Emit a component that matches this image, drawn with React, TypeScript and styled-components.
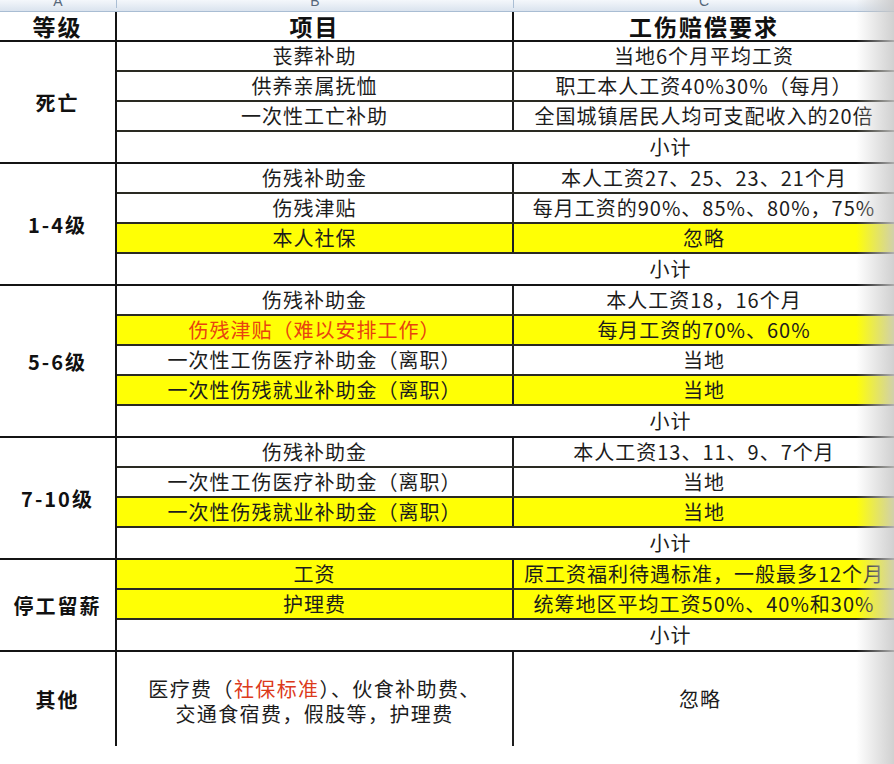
import styled, { createGlobalStyle } from "styled-components";

interface Row {
  item?: string;
  demand?: string;
  highlight?: boolean;
  red?: boolean;
  subtotal?: boolean;
}

interface Group {
  level: string;
  rows: Row[];
}

const GlobalStyle = createGlobalStyle`
  html, body {
    margin: 0;
    padding: 0;
    background: #ffffff;
  }
  body {
    font-family: "Noto Sans CJK SC", "Noto Sans", sans-serif;
    color: #1c1c1c;
  }
`;

const Sheet = styled.div`
  position: relative;
  width: 894px;
  height: 764px;
  overflow: hidden;
  background: #ffffff;

  /* grey fade along the right edge of the photo */
  &::after {
    content: "";
    position: absolute;
    top: 0;
    right: 0;
    bottom: 0;
    width: 38px;
    background: linear-gradient(
      to right,
      rgba(255, 255, 255, 0),
      rgba(200, 200, 200, 0.85)
    );
    pointer-events: none;
  }
`;

const ColumnBar = styled.div`
  display: grid;
  grid-template-columns: 117px 397px 1fr;
  height: 12px;
  overflow: hidden;
  background: linear-gradient(#f4f7fb, #dae3ee);
  border-bottom: 1px solid #a9bdd3;
  box-sizing: border-box;
`;

const ColumnLetter = styled.div`
  display: flex;
  justify-content: center;
  font-family: "Liberation Sans", Arial, sans-serif;
  font-size: 14px;
  line-height: 1;
  color: #56677a;
  border-right: 1px solid #aabed4;
  transform: translateY(-6px);

  &:last-child {
    border-right: none;
  }
`;

const Columns = styled.div`
  display: grid;
  grid-template-columns: 117px 397px 1fr;
  box-sizing: border-box;
`;

const TitleRow = styled(Columns)`
  height: 30px;
  border-bottom: 2px solid #141414;
`;

const TitleCell = styled.div<{ $split?: boolean }>`
  display: flex;
  align-items: center;
  justify-content: center;
  padding-top: 1px;
  font-size: 23px;
  line-height: 1;
  font-weight: 700;
  letter-spacing: 2px;
  color: #111;
  border-right: ${({ $split }) => ($split ? "2px solid #141414" : "none")};
`;

const GroupBlock = styled.div`
  display: flex;
  border-bottom: 2px solid #141414;
`;

const LevelCell = styled.div`
  width: 117px;
  flex-shrink: 0;
  display: flex;
  align-items: center;
  justify-content: center;
  box-sizing: border-box;
  border-right: 2px solid #141414;
  font-size: 20px;
  font-weight: 700;
  letter-spacing: 2px;
  color: #111;
`;

const RowStack = styled.div`
  flex: 1;
  display: flex;
  flex-direction: column;
`;

const ItemRow = styled.div<{ $highlight?: boolean }>`
  display: grid;
  grid-template-columns: 397px 1fr;
  height: 30px;
  box-sizing: border-box;
  background: ${({ $highlight }) => ($highlight ? "#ffff05" : "transparent")};
  border-bottom: 2px solid #2a2a22;

  &:last-child {
    border-bottom: none;
  }
`;

const Cell = styled.div<{ $red?: boolean; $split?: boolean }>`
  display: flex;
  align-items: center;
  justify-content: center;
  white-space: nowrap;
  font-size: 20px;
  line-height: 1;
  letter-spacing: 1px;
  color: ${({ $red }) => ($red ? "#e8430f" : "#1c1c1c")};
  border-right: ${({ $split }) => ($split ? "2px solid #1e1e1e" : "none")};
`;

const SubtotalRow = styled.div`
  display: flex;
  align-items: center;
  justify-content: center;
  height: 30px;
  padding-left: 330px;
  font-size: 20px;
  line-height: 1;
  letter-spacing: 1px;
  color: #1c1c1c;
`;

const OtherRow = styled(Columns)`
  height: 94px;
`;

const OtherLevel = styled(LevelCell)`
  width: auto;
`;

const OtherItem = styled.div`
  display: flex;
  flex-direction: column;
  align-items: center;
  justify-content: center;
  gap: 5px;
  border-right: 2px solid #1e1e1e;
  font-size: 20px;
  letter-spacing: 1.4px;
  line-height: 1;
  color: #1c1c1c;
  padding-top: 4px;
`;

const RedText = styled.span`
  color: #dc3a1c;
`;

const OtherDemand = styled(Cell)`
  padding-right: 8px;
`;

const subtotal: Row = { subtotal: true };

const groups: Group[] = [
  {
    level: "死亡",
    rows: [
      { item: "丧葬补助", demand: "当地6个月平均工资" },
      { item: "供养亲属抚恤", demand: "职工本人工资40%30%（每月）" },
      { item: "一次性工亡补助", demand: "全国城镇居民人均可支配收入的20倍" },
      subtotal,
    ],
  },
  {
    level: "1-4级",
    rows: [
      { item: "伤残补助金", demand: "本人工资27、25、23、21个月" },
      { item: "伤残津贴", demand: "每月工资的90%、85%、80%，75%" },
      { item: "本人社保", demand: "忽略", highlight: true },
      subtotal,
    ],
  },
  {
    level: "5-6级",
    rows: [
      { item: "伤残补助金", demand: "本人工资18，16个月" },
      {
        item: "伤残津贴（难以安排工作）",
        demand: "每月工资的70%、60%",
        highlight: true,
        red: true,
      },
      { item: "一次性工伤医疗补助金（离职）", demand: "当地" },
      { item: "一次性伤残就业补助金（离职）", demand: "当地", highlight: true },
      subtotal,
    ],
  },
  {
    level: "7-10级",
    rows: [
      { item: "伤残补助金", demand: "本人工资13、11、9、7个月" },
      { item: "一次性工伤医疗补助金（离职）", demand: "当地" },
      { item: "一次性伤残就业补助金（离职）", demand: "当地", highlight: true },
      subtotal,
    ],
  },
  {
    level: "停工留薪",
    rows: [
      {
        item: "工资",
        demand: "原工资福利待遇标准，一般最多12个月",
        highlight: true,
      },
      { item: "护理费", demand: "统筹地区平均工资50%、40%和30%", highlight: true },
      subtotal,
    ],
  },
];

const App = () => {
  return (
    <>
      <GlobalStyle />
      <Sheet>
        <ColumnBar>
          <ColumnLetter>A</ColumnLetter>
          <ColumnLetter>B</ColumnLetter>
          <ColumnLetter>C</ColumnLetter>
        </ColumnBar>

        <TitleRow>
          <TitleCell $split>等级</TitleCell>
          <TitleCell $split>项目</TitleCell>
          <TitleCell>工伤赔偿要求</TitleCell>
        </TitleRow>

        {groups.map((group) => (
          <GroupBlock key={group.level}>
            <LevelCell>{group.level}</LevelCell>
            <RowStack>
              {group.rows.map((row, i) =>
                row.subtotal ? (
                  <SubtotalRow key={i}>小计</SubtotalRow>
                ) : (
                  <ItemRow key={i} $highlight={row.highlight}>
                    <Cell $split $red={row.red}>
                      {row.item}
                    </Cell>
                    <Cell>{row.demand}</Cell>
                  </ItemRow>
                )
              )}
            </RowStack>
          </GroupBlock>
        ))}

        <OtherRow>
          <OtherLevel>其他</OtherLevel>
          <OtherItem>
            <span>
              医疗费（<RedText>社保标准</RedText>）、伙食补助费、
            </span>
            <span>交通食宿费，假肢等，护理费</span>
          </OtherItem>
          <OtherDemand>忽略</OtherDemand>
        </OtherRow>
      </Sheet>
    </>
  );
};

export default App;
